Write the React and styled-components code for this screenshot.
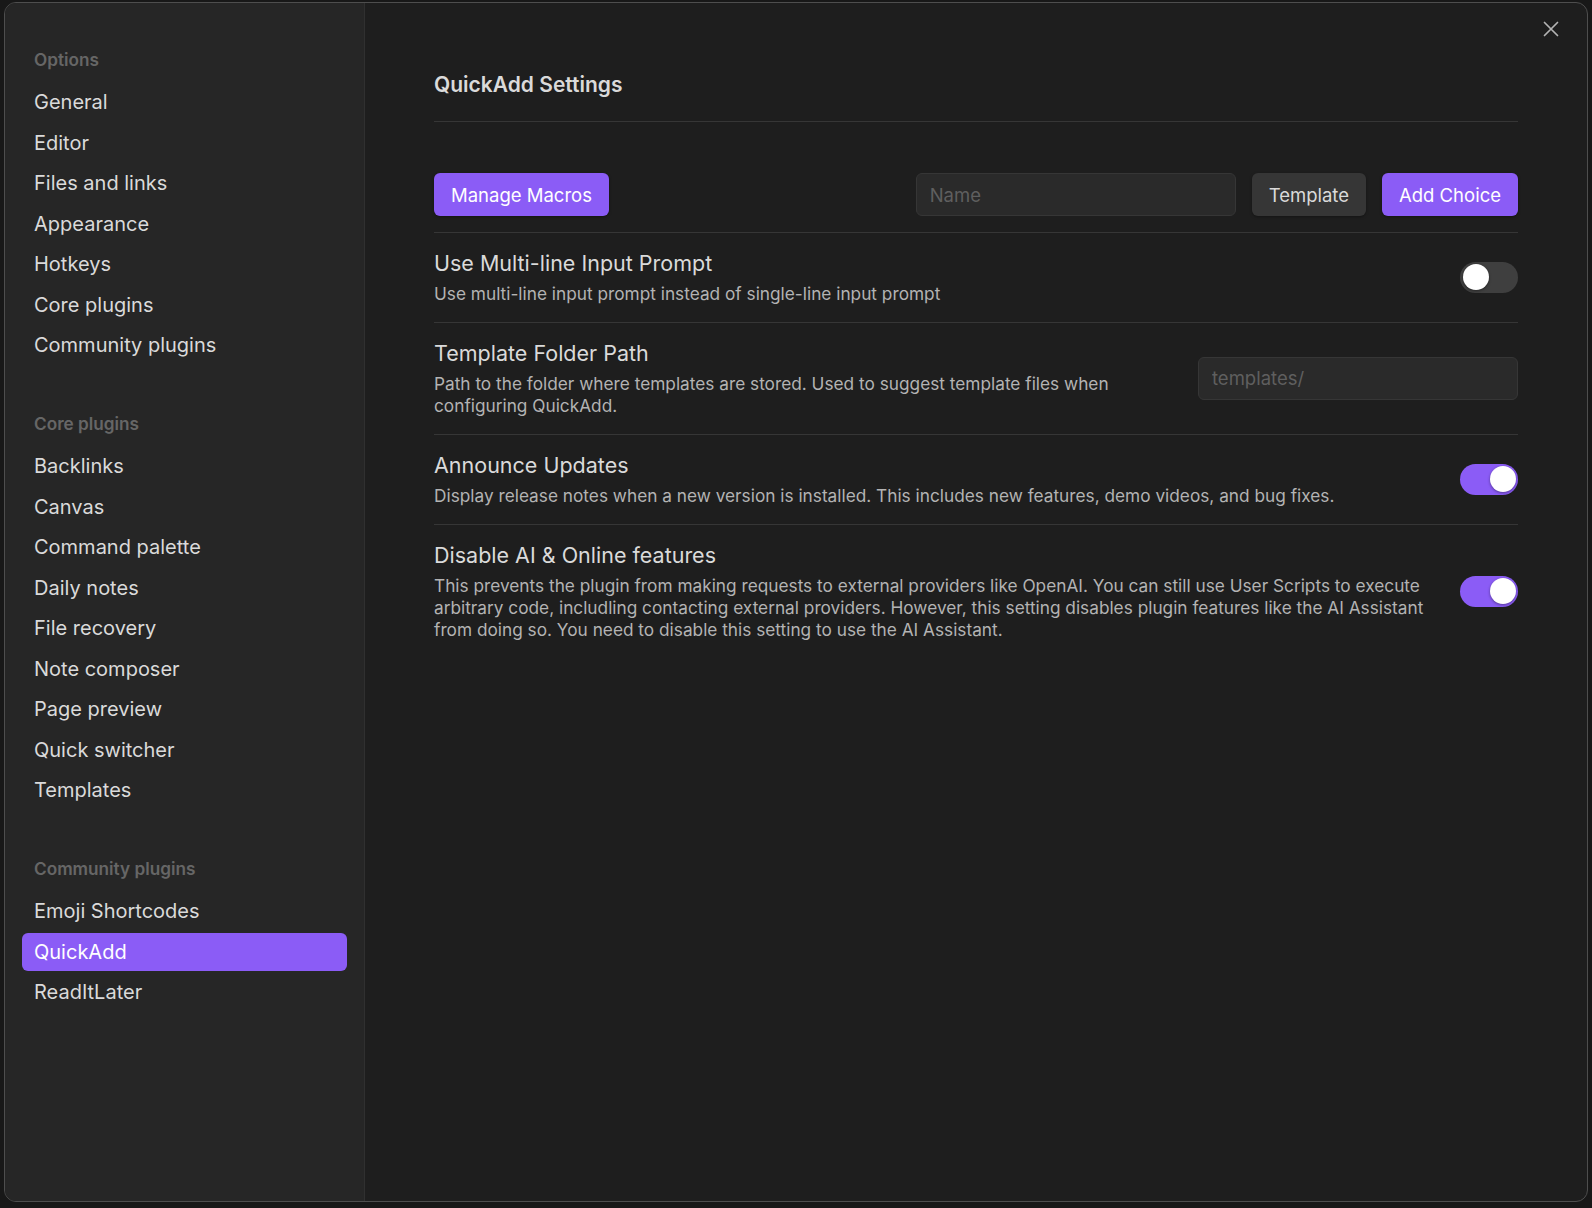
import React from "react";
import styled, { createGlobalStyle } from "styled-components";

const Global = createGlobalStyle`
  html, body { margin: 0; padding: 0; background: #181818; }
  body { font-family: Inter, "Noto Sans", sans-serif; -webkit-font-smoothing: antialiased; }
  * { box-sizing: border-box; }
`;

const Page = styled.div`
  width: 1592px;
  height: 1208px;
  padding: 2px 4px 6px 4px;
  overflow: hidden;
`;

const Modal = styled.div`
  position: relative;
  display: flex;
  height: 1200px;
  border: 1px solid #4e4e4e;
  border-radius: 12px;
  overflow: hidden;
  background: #1e1e1e;
`;

const Sidebar = styled.nav`
  width: 360px;
  flex: 0 0 360px;
  background: #262626;
  border-right: 1px solid #303030;
  padding: 45px 17px 0 17px;
  display: flex;
  flex-direction: column;
`;

const Group = styled.div`
  display: flex;
  flex-direction: column;
  gap: 3px;
  margin-bottom: 48px;
`;

const GroupTitle = styled.div`
  font-size: 17.2px;
  font-weight: 600;
  color: #666666;
  line-height: 24px;
  padding: 0 12px;
  margin-bottom: 8.5px;
`;

const NavItem = styled.div`
  height: 37.5px;
  display: flex;
  align-items: center;
  padding: 0 12px;
  border-radius: 6px;
  font-size: 20px;
  color: ${(p) => (p.$active ? "#ffffff" : "#dadada")};
  background: ${(p) => (p.$active ? "#8b5cf6" : "transparent")};
`;

const Main = styled.main`
  flex: 1;
  padding: 68px 69px 0 69px;
  display: flex;
  flex-direction: column;
`;

const Title = styled.h2`
  margin: 0;
  font-size: 21px;
  font-weight: 600;
  line-height: 28px;
  color: #dadada;
  padding-bottom: 22px;
  border-bottom: 1px solid #363636;
`;

const ButtonRow = styled.div`
  display: flex;
  align-items: center;
  gap: 16px;
  padding: 51px 0 16px 0;
`;

const Spacer = styled.div`
  flex: 1;
`;

const Button = styled.button`
  height: 43px;
  padding: 0 17px;
  border: none;
  border-radius: 6px;
  font-family: inherit;
  font-size: 18.5px;
  color: ${(p) => (p.$primary ? "#ffffff" : "#dadada")};
  background: ${(p) => (p.$primary ? "#8b5cf6" : "#363636")};
  box-shadow: 0 1px 3px rgba(0, 0, 0, 0.35);
  cursor: pointer;
`;

const TextInput = styled.input`
  width: ${(p) => p.$width || 320}px;
  height: 43px;
  padding: 0 13px;
  background: #2a2a2a;
  border: 1px solid #363636;
  border-radius: 6px;
  font-family: inherit;
  font-size: 18.5px;
  color: #dadada;
  outline: none;
  &::placeholder { color: #5f5f5f; }
`;

const SettingItem = styled.div`
  display: flex;
  align-items: center;
  border-top: 1px solid #363636;
  padding: 16px 0 17px 0;
`;

const Info = styled.div`
  flex: 1 1 auto;
  margin-right: 20px;
  min-width: 0;
`;

const Name = styled.div`
  font-size: 21.5px;
  line-height: 29px;
  color: #dadada;
  margin-bottom: 5px;
`;

const Desc = styled.div`
  font-size: 17.25px;
  line-height: 22px;
  color: #b3b3b3;
`;

const Control = styled.div`
  flex: 0 0 auto;
  display: flex;
  justify-content: flex-end;
`;

const Toggle = styled.div`
  position: relative;
  width: 58px;
  height: 31px;
  border-radius: 16px;
  background: ${(p) => (p.$on ? "#8b5cf6" : "#3f3f3f")};
  &::after {
    content: "";
    position: absolute;
    top: 2.5px;
    left: ${(p) => (p.$on ? "29.5px" : "2.5px")};
    width: 26px;
    height: 26px;
    border-radius: 50%;
    background: #ffffff;
    box-shadow: 0 1px 3px rgba(0, 0, 0, 0.4);
  }
`;

const Close = styled.div`
  position: absolute;
  top: 16px;
  right: 26px;
  width: 20px;
  height: 20px;
  display: flex;
  align-items: center;
  justify-content: center;
  color: #b3b3b3;
`;

const groups = [
  {
    title: "Options",
    items: ["General", "Editor", "Files and links", "Appearance", "Hotkeys", "Core plugins", "Community plugins"],
  },
  {
    title: "Core plugins",
    items: ["Backlinks", "Canvas", "Command palette", "Daily notes", "File recovery", "Note composer", "Page preview", "Quick switcher", "Templates"],
  },
  {
    title: "Community plugins",
    items: ["Emoji Shortcodes", "QuickAdd", "ReadItLater"],
  },
];

const settings = [
  {
    name: "Use Multi-line Input Prompt",
    desc: "Use multi-line input prompt instead of single-line input prompt",
    control: <Toggle $on={false} />,
  },
  {
    name: "Template Folder Path",
    desc: "Path to the folder where templates are stored. Used to suggest template files when configuring QuickAdd.",
    control: <TextInput placeholder="templates/" $width={320} />,
  },
  {
    name: "Announce Updates",
    desc: "Display release notes when a new version is installed. This includes new features, demo videos, and bug fixes.",
    control: <Toggle $on />,
  },
  {
    name: "Disable AI & Online features",
    desc: "This prevents the plugin from making requests to external providers like OpenAI. You can still use User Scripts to execute arbitrary code, includling contacting external providers. However, this setting disables plugin features like the AI Assistant from doing so. You need to disable this setting to use the AI Assistant.",
    control: <Toggle $on />,
  },
];

export default function App() {
  return (
    <Page>
      <Global />
      <Modal>
        <Sidebar>
          {groups.map((g) => (
            <Group key={g.title}>
              <GroupTitle>{g.title}</GroupTitle>
              {g.items.map((it) => (
                <NavItem key={it} $active={it === "QuickAdd"}>
                  {it}
                </NavItem>
              ))}
            </Group>
          ))}
        </Sidebar>
        <Main>
          <Title>QuickAdd Settings</Title>
          <ButtonRow>
            <Button $primary>Manage Macros</Button>
            <Spacer />
            <TextInput placeholder="Name" $width={320} />
            <Button>Template</Button>
            <Button $primary>Add Choice</Button>
          </ButtonRow>
          {settings.map((s) => (
            <SettingItem key={s.name}>
              <Info>
                <Name>{s.name}</Name>
                <Desc>{s.desc}</Desc>
              </Info>
              <Control>{s.control}</Control>
            </SettingItem>
          ))}
        </Main>
        <Close>
          <svg width="18" height="18" viewBox="0 0 18 18" fill="none" stroke="currentColor" strokeWidth="1.7" strokeLinecap="round">
            <path d="M2.5 2.5L15.5 15.5M15.5 2.5L2.5 15.5" />
          </svg>
        </Close>
      </Modal>
    </Page>
  );
}
